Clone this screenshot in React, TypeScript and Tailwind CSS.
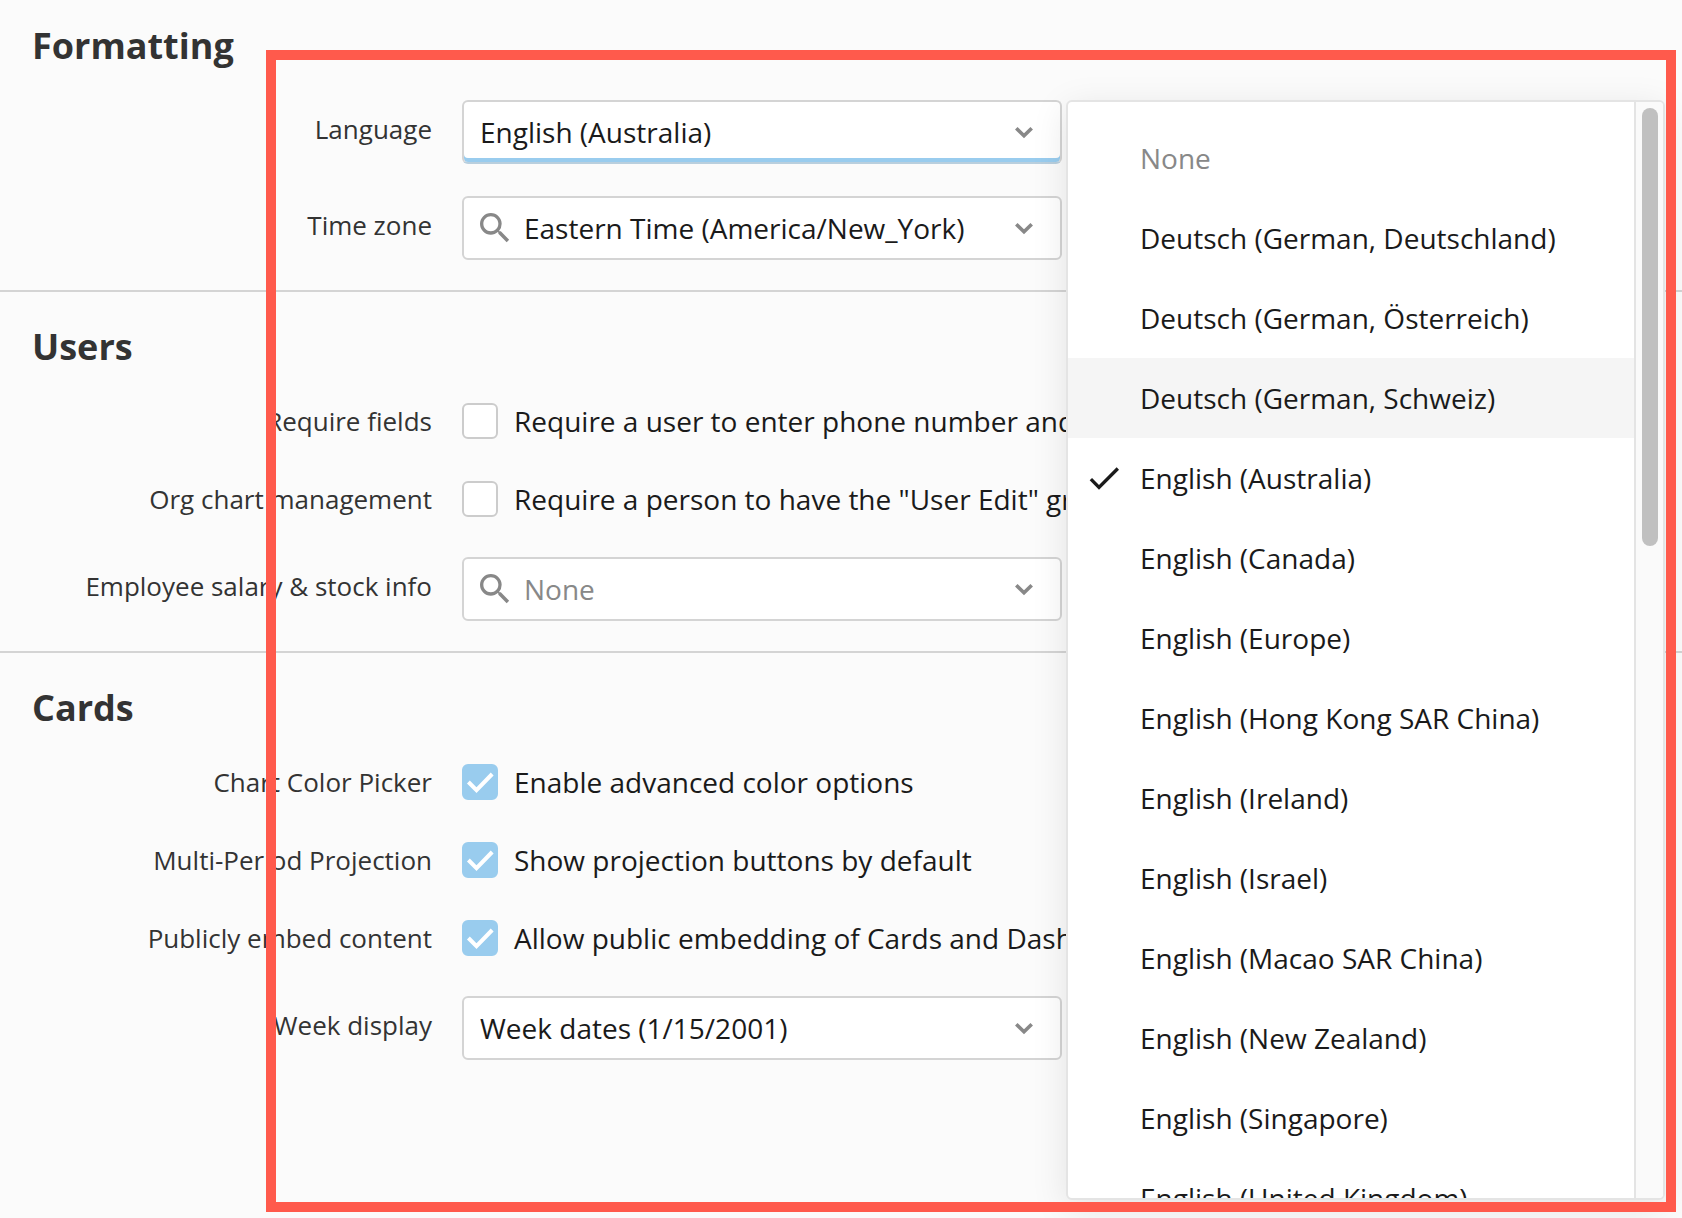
import React, { ReactNode, useState } from "react";
import { MdCheck, MdSearch } from "react-icons/md";

const languages = [
  "None",
  "Deutsch (German, Deutschland)",
  "Deutsch (German, Österreich)",
  "Deutsch (German, Schweiz)",
  "English (Australia)",
  "English (Canada)",
  "English (Europe)",
  "English (Hong Kong SAR China)",
  "English (Ireland)",
  "English (Israel)",
  "English (Macao SAR China)",
  "English (New Zealand)",
  "English (Singapore)",
  "English (United Kingdom)",
];

function Chevron({ className }: { className: string }) {
  return (
    <svg viewBox="0 0 32 32" fill="none" stroke="currentColor" strokeWidth="3.6" className={className}>
      <path d="M8.3 12.2l7.7 7.6 7.7-7.6" />
    </svg>
  );
}

function BoxCheck({ className }: { className: string }) {
  return (
    <svg viewBox="0 0 36 36" fill="none" stroke="currentColor" strokeWidth="4" className={className}>
      <path d="M6.4 18l8.1 8.2L30.2 10" />
    </svg>
  );
}

function Section({ title, children }: { title: string; children: ReactNode }) {
  return (
    <section className="border-b-2 border-[#d4d4d4] pt-8 pb-[30px] last:border-b-0">
      <h2 className="pl-8 text-[36px] leading-[46px] font-bold text-[#333]">{title}</h2>
      {children}
    </section>
  );
}

function Row({ id, label, className, children }: { id: string; label: string; className: string; children: ReactNode }) {
  return (
    <div className={`flex gap-[30px] ${className}`}>
      <label htmlFor={id} className="w-[432px] shrink-0 text-right text-[26px] leading-9 whitespace-nowrap text-[#333]">
        {label}
      </label>
      {children}
    </div>
  );
}

function SelectRow({ id, label, className, options, search, focused, muted }: {
  id: string;
  label: string;
  className: string;
  options: string[];
  search?: boolean;
  focused?: boolean;
  muted?: boolean;
}) {
  return (
    <Row id={id} label={label} className={`*:first:mt-[11px] ${className}`}>
      <div className="relative w-[600px]">
        {search && <MdSearch className="pointer-events-none absolute top-3 left-[13px] size-10 text-[#888]" />}
        <select
          id={id}
          className={`h-16 w-full appearance-none rounded-md border-2 border-[#d4d4d4] bg-white pr-16 text-[28px] outline-none ${search ? "pl-[60px]" : "pl-4"} ${focused ? "border-b-[#b9cfde] shadow-[inset_0_-4px_0_#99ccee]" : ""} ${muted ? "text-[#888]" : "text-[#1a1a1a]"}`}
        >
          {options.map((o) => (
            <option key={o}>{o}</option>
          ))}
        </select>
        <Chevron className="pointer-events-none absolute top-4 right-[22px] size-8 text-[#888]" />
      </div>
    </Row>
  );
}

function CheckRow({ id, label, text, className, checked }: {
  id: string;
  label: string;
  text: string;
  className: string;
  checked?: boolean;
}) {
  return (
    <Row id={id} label={label} className={className}>
      <div className="flex items-center gap-4">
        <span className="grid size-9 shrink-0">
          <input
            id={id}
            type="checkbox"
            defaultChecked={checked}
            className="peer col-start-1 row-start-1 size-9 appearance-none rounded-md border-2 border-[#ccc] bg-white checked:border-[#99ccee] checked:bg-[#99ccee]"
          />
          <BoxCheck className="pointer-events-none invisible col-start-1 row-start-1 size-9 text-white peer-checked:visible" />
        </span>
        <label htmlFor={id} className="text-[28px] leading-9 whitespace-nowrap text-[#1a1a1a]">
          {text}
        </label>
      </div>
    </Row>
  );
}

function LanguageMenu() {
  const [selected, setSelected] = useState("English (Australia)");
  return (
    <div className="absolute top-[100px] right-[17px] bottom-[18px] flex w-[599px] overflow-hidden rounded-md border-2 border-[#e4e4e4] bg-white shadow-[0_8px_36px_rgba(0,0,0,0.1)]">
      <div role="listbox" aria-label="Language" className="flex-1 overflow-hidden py-4">
        {languages.map((name) => (
          <button
            key={name}
            role="option"
            aria-selected={name === selected}
            onClick={() => setSelected(name)}
            className={`flex h-20 w-full items-center text-left text-[28px] whitespace-nowrap ${name === "None" ? "text-[#888]" : "text-[#1a1a1a]"} ${name === "Deutsch (German, Schweiz)" ? "bg-[#f5f5f5]" : ""}`}
          >
            <span className="flex w-[72px] shrink-0 justify-center">
              {name === selected && <MdCheck className="size-10" />}
            </span>
            {name}
          </button>
        ))}
      </div>
      <div className="flex w-[29px] justify-center border-l-2 border-[#e4e4e4] bg-[#fafafa] pt-1.5">
        <div className="h-[438px] w-4 rounded-full bg-[#c0c0c0]" />
      </div>
    </div>
  );
}

export default function App() {
  return (
    <main className="relative h-screen overflow-hidden bg-[#fbfbfb] font-['Open_Sans',sans-serif]">
      <div className="-mt-[9px]">
        <Section title="Formatting">
          <SelectRow id="language" label="Language" className="mt-[31px]" options={["English (Australia)"]} focused />
          <SelectRow id="timezone" label="Time zone" className="mt-8" options={["Eastern Time (America/New_York)"]} search />
        </Section>
        <Section title="Users">
          <CheckRow id="require" label="Require fields" className="mt-[33px]" text="Require a user to enter phone number and title" />
          <CheckRow id="org" label="Org chart management" className="mt-[42px]" text={'Require a person to have the "User Edit" grant'} />
          <SelectRow id="salary" label="Employee salary & stock info" className="mt-10" options={["None"]} search muted />
        </Section>
        <Section title="Cards">
          <CheckRow id="picker" label="Chart Color Picker" className="mt-[33px]" text="Enable advanced color options" checked />
          <CheckRow id="projection" label="Multi-Period Projection" className="mt-[42px]" text="Show projection buttons by default" checked />
          <CheckRow id="embed" label="Publicly embed content" className="mt-[42px]" text="Allow public embedding of Cards and Dashboards" checked />
          <SelectRow id="week" label="Week display" className="mt-10" options={["Week dates (1/15/2001)"]} />
        </Section>
      </div>
      <LanguageMenu />
      <div className="pointer-events-none absolute top-[50px] right-1.5 bottom-1.5 left-[266px] border-10 border-[#ff5a4c]" />
    </main>
  );
}
